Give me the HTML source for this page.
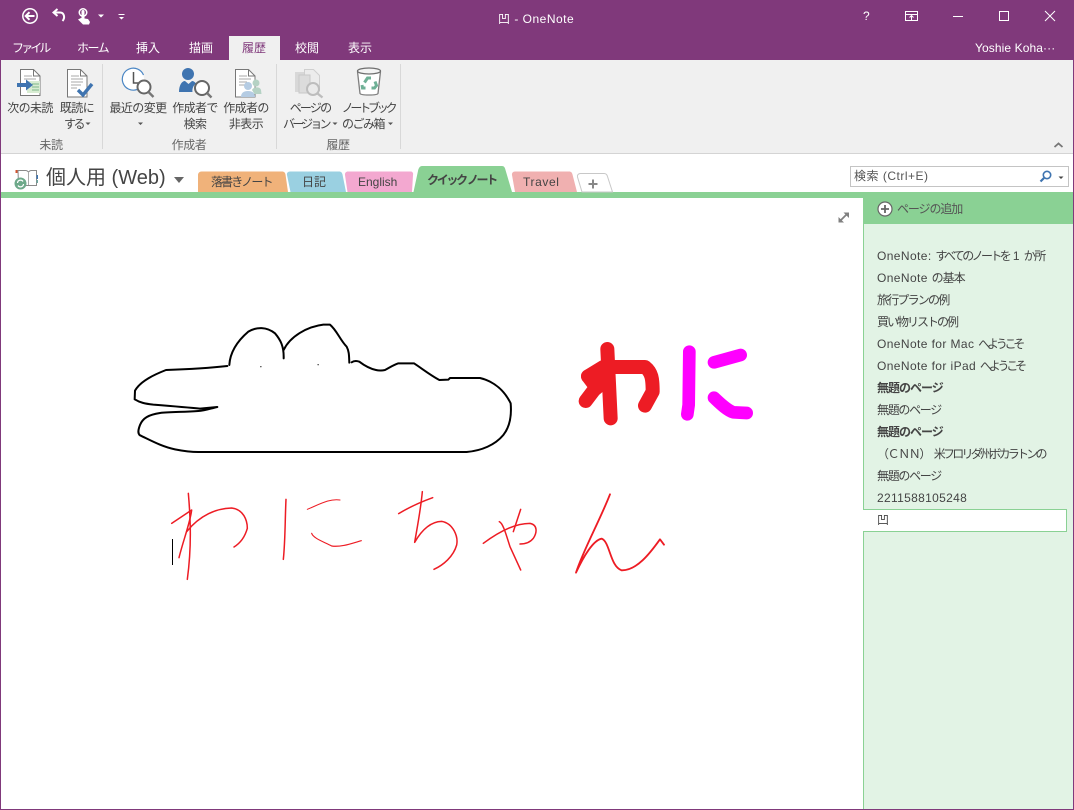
<!DOCTYPE html>
<html lang="ja">
<head>
<meta charset="utf-8">
<title>OneNote</title>
<style>
html,body{margin:0;padding:0}
body{width:1074px;height:810px;position:relative;overflow:hidden;background:#fff;font-family:"Liberation Sans","Noto Sans CJK JP",sans-serif;font-size:12px;color:#444}
.a{position:absolute}
.t{position:absolute;white-space:nowrap;line-height:16px}
.c{text-align:center;transform:translateX(-50%)}
.w{color:#fff}
.r{letter-spacing:-.6px;color:#444}
.g{color:#666;letter-spacing:-.4px}
.p{left:877px;color:#444;letter-spacing:.4px}
.b{font-weight:bold}
svg{position:absolute;left:0;top:0;overflow:visible}
</style>
</head>
<body>
<div class="a" style="left:0;top:0;width:1074px;height:60px;background:#80397b"></div>
<div class="a" style="left:229px;top:36px;width:51px;height:24px;background:#f0f0f0"></div>
<div class="a" style="left:1px;top:60px;width:1072px;height:93px;background:#f0f0f0"></div>
<div class="a" style="left:1px;top:153px;width:1072px;height:1px;background:#d4d4d4"></div>
<div class="a" style="left:1px;top:192px;width:1072px;height:6px;background:#8ad194"></div>
<div class="a" style="left:864px;top:198px;width:209px;height:26px;background:#8ad194"></div>
<div class="a" style="left:864px;top:224px;width:209px;height:586px;background:#e2f3e5"></div>
<div class="a" style="left:863px;top:198px;width:1px;height:612px;background:#8ad194"></div>
<div class="a" style="left:863px;top:509px;width:203px;height:21px;background:#fff;border:1px solid #8ad194;border-left:0"></div>
<div class="a" style="left:0;top:60px;width:1px;height:750px;background:#80397b"></div>
<div class="a" style="left:1073px;top:60px;width:1px;height:750px;background:#80397b"></div>
<div class="a" style="left:0;top:809px;width:1074px;height:1px;background:#80397b"></div>

<!-- ribbon separators -->
<div class="a" style="left:102px;top:64px;width:1px;height:85px;background:#d8d8d8"></div>
<div class="a" style="left:276px;top:64px;width:1px;height:85px;background:#d8d8d8"></div>
<div class="a" style="left:400px;top:64px;width:1px;height:85px;background:#d8d8d8"></div>

<svg width="1074" height="810" viewBox="0 0 1074 810">
<!-- QAT -->
<g fill="none" stroke="#fff">
<circle cx="30" cy="16" r="7.2" stroke-width="1.5"/>
<path d="M34.5 16H26M29.5 12.2L25.7 16l3.8 3.8" stroke-width="2"/>
<path d="M57.500 9L53.500 12.500l4 3.500M53.500 12.500H60c4 0 5.500 5 2.500 8.500" stroke-width="2"/>
</g>
<g fill="#fff">
<circle cx="83" cy="12.500" r="4.500"/>
<circle cx="83" cy="12.500" r="3" fill="#80397b"/>
<rect x="81.500" y="10" width="3" height="11" rx="1.400"/>
<path d="M78 19.500l3-1.500 7 1 2 3-1 2.500H83z"/>
<path d="M98 14.500h6l-3 3zM118.500 14h6v1h-6zM119 17h5l-2.500 2.500z"/>
</g>
<!-- window controls -->
<g fill="none" stroke="#fff" stroke-width="1">
<rect x="905.500" y="11.500" width="12" height="9"/>
<path d="M905.500 14.500h12M911.500 20v-4M909.500 17.500l2-2 2 2"/>
<path d="M953 16.500h10"/>
<rect x="999.500" y="11.500" width="9" height="9"/>
<path d="M1045 11l10 10M1055 11l-10 10"/>
</g>

<!-- ribbon icons -->
<g>
<path d="M20.500 69.500h13l6.500 6.500v19.500H20.500z" fill="#fff" stroke="#777"/>
<path d="M33.500 69.500V76H40" fill="none" stroke="#777"/>
<path d="M24 76h8M24 79h12" stroke="#aaa"/>
<rect x="27" y="81" width="13" height="12" fill="#d8ecd2"/>
<path d="M32 84h7M32 87h7M32 90h7" stroke="#7fb98b"/>
<path d="M17 85h13" stroke="#3f74b0" stroke-width="4"/>
<path d="M26 79.500l7 5.500-7 5.500z" fill="#3f74b0"/>
</g>
<g>
<path d="M67.500 69.500h13l6.500 6.500v21H67.500z" fill="#fff" stroke="#777"/>
<path d="M80.500 69.500V76H87" fill="none" stroke="#777"/>
<path d="M71 76h8M71 79h12M71 82h12M71 85h10M71 88h6" stroke="#aaa"/>
<path d="M78 90l5 5 9-11" fill="none" stroke="#3f74b0" stroke-width="3.400"/>
</g>
<g>
<circle cx="133" cy="79" r="11" fill="#fff"/>
<path d="M137 89.500A11 11 0 1 1 143.500 75" fill="none" stroke="#4a86c4" stroke-width="1.200"/>
<path d="M133.500 72v11h7" fill="none" stroke="#555" stroke-width="1.500"/>
<circle cx="144" cy="87" r="6.500" fill="#fff" stroke="#666" stroke-width="2"/>
<path d="M148.500 92l5 5" stroke="#777" stroke-width="2.400"/>
</g>
<g>
<circle cx="188" cy="74" r="6" fill="#3f74b0"/>
<path d="M179 92c0-7 3-11 6-11l3.500 3 3.500-3c1.500 0 3 1 4 2.500-3 2-4 6-3.500 8.500z" fill="#3f74b0"/>
<circle cx="202" cy="88" r="7" fill="#fff" stroke="#666" stroke-width="2"/>
<path d="M207 93l4.500 4.500" stroke="#777" stroke-width="2.400"/>
</g>
<g>
<path d="M235.500 69.500h13l6.500 6.500v21h-19.500z" fill="#fff" stroke="#777"/>
<path d="M248.500 69.500V76H255" fill="none" stroke="#777"/>
<path d="M239 76h8M239 79h12M239 82h8M239 85h6" stroke="#aaa"/>
<circle cx="248" cy="86" r="4" fill="#b5cce3"/>
<path d="M241 97c0-4 2.500-6 7-6s7 2 7 6z" fill="#b5cce3"/>
<circle cx="256" cy="83" r="3.500" fill="#b5d2c4"/>
<path d="M252 90c1-3 8-4 9 0l.500 4h-7z" fill="#b5d2c4"/>
</g>
<g>
<rect x="295" y="72" width="13" height="20" fill="#d8d8d8"/>
<path d="M304.500 69.500h9l6 6v15h-15z" fill="#ececec" stroke="#cfcfcf"/>
<rect x="299" y="75" width="11" height="18" fill="#dcdcdc" stroke="#c8c8c8"/>
<circle cx="313" cy="89" r="6" fill="#eaeaea" stroke="#bdbdbd" stroke-width="2"/>
<path d="M317.500 93.500l5 4" stroke="#bdbdbd" stroke-width="2.400"/>
</g>
<g>
<path d="M357.500 71.500l2.500 22c1 2 17 2 18 0l2.500-22" fill="#fff" stroke="#7f7f7f" stroke-width="1.300"/>
<ellipse cx="369" cy="71" rx="11.500" ry="3" fill="#f4f4f4" stroke="#6f6f6f" stroke-width="1.300"/>
<path d="M364.500 82.500l3-4.500h3.500M375 81.500l1.500 4-2 2.500h-3M365.500 88h-3l-.500-3" fill="none" stroke="#6fb096" stroke-width="3"/>
</g>
<path d="M85.500 122.500h5l-2.500 2.500zM138 122.500h5l-2.500 2.500zM332.500 122.500h5l-2.500 2.500zM388 122.500h5l-2.500 2.500z" fill="#555"/>
<path d="M1054.500 147l4-3.500 4 3.500" fill="none" stroke="#777" stroke-width="1.800"/>

<!-- notebook icon -->
<g>
<path d="M18 170.500h8c1 0 2 1 2.500 1.500.5-.5 1.500-1.500 2.500-1.500h5.500v15h-18z" fill="#fff" stroke="#8a8a8a"/>
<path d="M28.500 172v13" stroke="#aaa"/>
<path d="M15.500 170h2v3h-2z" fill="#d2532e"/>
<path d="M36.500 175h1.500v4h-1.500z" fill="#3f74b0"/>
<path d="M36.500 180h1.500v3h-1.500z" fill="#6fa6a0"/>
<circle cx="20.500" cy="183.500" r="6" fill="#6ea98a"/>
<path d="M17.500 183a3 3 0 0 1 5.500-1.500M23.500 184a3 3 0 0 1-5.500 1.500" fill="none" stroke="#fff" stroke-width="1.200"/>
<path d="M174 177h10l-5 6z" fill="#666"/>
</g>

<!-- section tabs -->
<path d="M198 192V175c0-2 1.500-3.500 3.500-3.500H282c2 0 3 1 3.500 3L288 192z" fill="#f0b27a"/>
<path d="M290.500 192L287 175c-.5-2 1-3.500 3-3.500h49c2 0 3 1 3.500 3L346 192z" fill="#9ad0e1"/>
<path d="M347.500 192L345 175c-.3-2 1-3.500 3-3.500h62.500c2 0 3 1.500 2.500 3.500L412 192z" fill="#f3a8d0"/>
<path d="M413.500 192L418 171c.5-3 2-5 4-5h80c2 0 3 1.500 3.500 4l6.500 22z" fill="#8ad194"/>
<path d="M515 192L512 175c-.3-2 1-3.500 3-3.500h54c2 0 3 1 3.500 3L577 192z" fill="#f0b0b0"/>
<path d="M582 192L577.500 177c-.5-2 1-3.500 3-3.500H604c2 0 3 1 3.500 3L612.500 192z" fill="#fff" stroke="#c8c8c8"/>
<path d="M593 179.500v9M588.500 184h9" stroke="#888" stroke-width="2"/>

<!-- search -->
<rect x="850.500" y="166.500" width="218" height="20" fill="#fff" stroke="#c4c4c4"/>
<circle cx="1047" cy="175" r="3.700" fill="#fff" stroke="#3f74b0" stroke-width="1.600"/>
<path d="M1044 178l-3.500 3.500" stroke="#3f74b0" stroke-width="2.200"/>
<path d="M1058.500 176.500h5l-2.500 2.500z" fill="#444"/>

<!-- add page / expand -->
<circle cx="885" cy="209" r="7" fill="#fff" stroke="#666" stroke-width="1.200"/>
<path d="M885 205v8M881 209h8" stroke="#666" stroke-width="1.800"/>
<path d="M840 221l7-7" fill="none" stroke="#808080" stroke-width="1.800"/>
<path d="M843.500 212.500h5.500v5.500zM838.500 217l0 5.500h5.500z" fill="#808080"/>

<!-- crocodile -->
<g transform="translate(120 310) scale(.33333)" fill="none" stroke="#000" stroke-width="6" stroke-linejoin="round" stroke-linecap="round">
<path d="M322 168C270 174 200 178 138 180 105 193 62 212 45 242L44 268C60 278 75 281 100 284 150 288 200 292 240 296L292 291C270 296 255 302 235 303 190 306 150 306 120 309 85 314 68 325 60 345 55 358 52 370 60 376 90 390 125 410 165 418 190 423 210 426 235 426L1040 426C1085 422 1125 405 1150 375 1170 350 1175 315 1172 280 1155 245 1125 215 1080 204L990 204 985 209 958 210C930 195 905 175 882 160L835 160C820 165 810 172 795 180 785 182 775 182 768 180 750 176 735 168 718 155 710 152 702 152 695 157"/>
<path d="M328 165C330 130 350 95 385 65 410 50 440 50 465 70 482 90 492 110 491 145M491 120C510 80 560 50 610 44L630 44C650 60 660 90 680 110 688 125 687 140 688 158"/>
<path d="M422 170h1M594 164h1" stroke="#555" stroke-width="4"/>
</g>
<!-- bold wani -->
<g transform="translate(570 335) scale(.33333)" fill="none" stroke-linecap="round" stroke-linejoin="round">
<g stroke="#ed1c24" stroke-width="42">
<path d="M112 42L122 250"/>
<path d="M54 124L100 96 225 96C245 112 248 130 248 170L225 212"/>
<path d="M54 124L72 148"/>
<path d="M47 198L72 165 108 135"/>
</g>
<g stroke="#ff00ff" stroke-width="38">
<path d="M358 50L356 210 352 238"/>
<path d="M432 82L512 60"/>
<path d="M432 188C450 205 470 225 490 232L530 234"/>
</g>
</g>
<!-- handwriting -->
<g transform="translate(160 480) scale(.33333)" fill="none" stroke="#ed1c24" stroke-width="4.500" stroke-linecap="round" stroke-linejoin="round">
<path d="M85 40C92 120 95 200 82 298"/>
<path d="M35 130L95 90C90 130 70 180 57 233"/>
<path d="M80 155C120 105 170 85 215 84 250 88 262 120 262 145 255 170 240 190 222 201"/>
<path d="M378 58C375 120 376 180 370 238"/>
<path d="M442 88C480 72 510 55 540 60" stroke-width="3"/>
<path d="M455 160C460 175 490 185 515 198 545 202 575 190 604 182" stroke-width="3.500"/>
<path d="M716 101C750 80 785 65 818 53"/>
<path d="M787 35C782 90 772 140 764 187 785 150 810 125 845 124 880 130 895 170 890 195 880 230 850 255 822 268"/>
<path d="M970 190C1010 160 1060 130 1110 130 1135 135 1130 160 1120 175 1110 188 1095 192 1080 192"/>
<path d="M1082 88L1060 155"/>
<path d="M1018 125C1030 130 1040 170 1050 200L1082 270"/>
<path d="M1350 43C1320 120 1270 210 1248 278 1270 230 1300 180 1325 176 1350 185 1350 260 1385 271 1430 272 1470 220 1500 178L1512 194" stroke-width="5.500"/>
</g>
<path d="M172.500 539v26" stroke="#000" stroke-width="1"/>
</svg>

<!-- title bar text -->
<div class="t w" style="left:498px;top:11px;letter-spacing:.5px">凹 - OneNote</div>
<div class="t w" style="left:863px;top:8px">?</div>
<div class="t w" style="left:12px;top:40px;letter-spacing:-2.900px">ファイル</div>
<div class="t w" style="left:77px;top:40px;letter-spacing:-1.500px">ホーム</div>
<div class="t w" style="left:136px;top:40px">挿入</div>
<div class="t w" style="left:189px;top:40px">描画</div>
<div class="t" style="left:242px;top:40px;color:#80397b">履歴</div>
<div class="t w" style="left:295px;top:40px">校閲</div>
<div class="t w" style="left:348px;top:40px">表示</div>
<div class="t w" style="left:975px;top:40px;letter-spacing:.1px">Yoshie Koha···</div>

<!-- ribbon text -->
<div class="t r c" style="left:30px;top:100px">次の未読</div>
<div class="t r c" style="left:77px;top:100px">既読に</div>
<div class="t r" style="left:64px;top:116px;letter-spacing:-2.500px">する</div>
<div class="t r c" style="left:138px;top:100px">最近の変更</div>
<div class="t r c" style="left:195px;top:100px">作成者で</div>
<div class="t r c" style="left:195px;top:116px">検索</div>
<div class="t r c" style="left:246px;top:100px">作成者の</div>
<div class="t r c" style="left:246px;top:116px">非表示</div>
<div class="t r c" style="left:310px;top:100px;letter-spacing:-1.800px">ページの</div>
<div class="t r" style="left:283px;top:116px;letter-spacing:-2.800px">バージョン</div>
<div class="t r c" style="left:368px;top:100px;letter-spacing:-3.200px">ノートブック</div>
<div class="t r" style="left:342px;top:116px;letter-spacing:-1.500px">のごみ箱</div>
<div class="t g c" style="left:51px;top:137px">未読</div>
<div class="t g c" style="left:189px;top:137px">作成者</div>
<div class="t g c" style="left:338px;top:137px">履歴</div>

<!-- notebook -->
<div class="t" style="left:46px;top:166px;font-size:20px;line-height:24px;color:#444">個人用 (Web)</div>

<!-- tabs text -->
<div class="t" style="left:211px;top:174px;letter-spacing:-1.900px">落書きノート</div>
<div class="t" style="left:302px;top:174px">日記</div>
<div class="t" style="left:358px;top:174px">English</div>
<div class="t" style="left:427px;top:172px;font-weight:bold;letter-spacing:-2.300px">クイック ノート</div>
<div class="t" style="left:523px;top:174px;letter-spacing:.6px">Travel</div>

<div class="t" style="left:854px;top:168px;color:#555;letter-spacing:.5px">検索 (Ctrl+E)</div>
<div class="t" style="left:897px;top:201px;color:#555;letter-spacing:-1.100px">ページの追加</div>

<!-- page list -->
<div class="t p" style="top:248px">OneNote: <span style="letter-spacing:-2.600px">すべてのノートを</span> 1 <span style="letter-spacing:-1.500px">か所</span></div>
<div class="t p" style="top:270px">OneNote <span style="letter-spacing:-1px">の基本</span></div>
<div class="t p" style="top:292px;letter-spacing:-1.800px">旅行プランの例</div>
<div class="t p" style="top:314px;letter-spacing:-2px">買い物リストの例</div>
<div class="t p" style="top:336px">OneNote for Mac <span style="letter-spacing:-3.200px">へようこそ</span></div>
<div class="t p" style="top:358px">OneNote for iPad <span style="letter-spacing:-3.200px">へようこそ</span></div>
<div class="t p b" style="top:380px;letter-spacing:-1px">無題のページ</div>
<div class="t p" style="top:402px;letter-spacing:-1.300px">無題のページ</div>
<div class="t p b" style="top:424px;letter-spacing:-1px">無題のページ</div>
<div class="t p" style="top:446px"><span style="letter-spacing:-1.400px">（ＣＮＮ）</span> <span style="letter-spacing:-2.750px">米フロリダ州ボカラトンの</span></div>
<div class="t p" style="top:468px;letter-spacing:-1.300px">無題のページ</div>
<div class="t p" style="top:490px;letter-spacing:.33px">2211588105248</div>
<div class="t p" style="top:512px">凹</div>
</body>
</html>
